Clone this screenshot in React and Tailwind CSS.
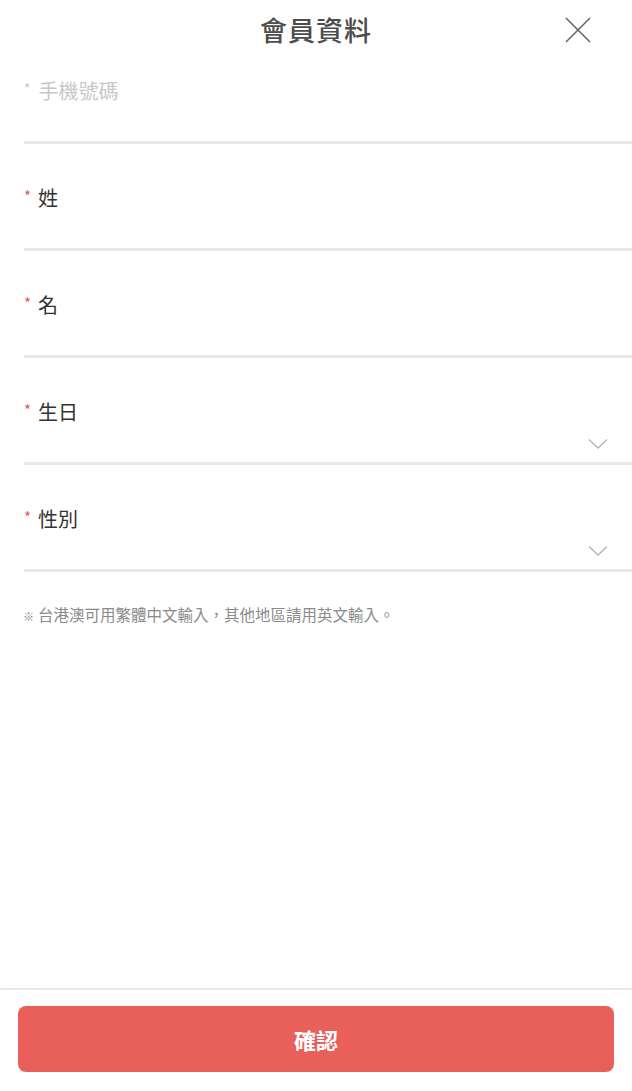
import React from "react";

const font = { fontFamily: '"Noto Sans CJK TC", "Noto Sans", sans-serif' };

function Chevron() {
  return (
    <svg width="20" height="12" viewBox="0 0 20 12" fill="none">
      <path d="M1 1.5 L10 10 L19 1.5" stroke="#b5b5b5" strokeWidth="1.4" />
    </svg>
  );
}

function Field({ label, first, placeholder, select }) {
  return (
    <div className={`${first ? "pt-[18px]" : "pt-[41px]"} border-b-[3px] border-[#e8e8e8]`}>
      <div className="h-[26px] flex items-center">
        {placeholder ? (
          <span className="text-[20px] text-[#c8c8c8] leading-[26px] flex items-center">
            <span className="text-[14px] mr-[8px] relative top-[-3px]">*</span>
            {label}
          </span>
        ) : (
          <span className="text-[20px] text-[#333] leading-[26px] flex items-center">
            <span className="text-[15px] text-[#e05b58] mr-[7px] relative top-[-2px]">*</span>
            {label}
          </span>
        )}
      </div>
      <div className="h-[37px] flex items-center justify-end pr-[24px]">
        {select && <Chevron />}
      </div>
    </div>
  );
}

export default function App() {
  return (
    <div className="h-screen bg-white flex flex-col" style={font}>
      <div className="h-[60px] relative flex items-center justify-center">
        <span className="text-[27px] font-medium text-[#4d4d4d] tracking-[1px]">會員資料</span>
        <button className="absolute right-[40px] top-[16px] w-[28px] h-[28px] flex items-center justify-center">
          <svg width="26" height="26" viewBox="0 0 26 26" fill="none">
            <path d="M1 1 L25 25 M25 1 L1 25" stroke="#666" strokeWidth="1.6" />
          </svg>
        </button>
      </div>
      <div className="pl-[24px]">
        <Field label="手機號碼" first placeholder />
        <Field label="姓" />
        <Field label="名" />
        <Field label="生日" select />
        <Field label="性別" select />
      </div>
      <div className="pl-[23px] mt-[32px] text-[15.5px] leading-[20px] text-[#8a8a8a]">
        <span className="text-[11px] mr-[4px]">※</span>台港澳可用繁體中文輸入，其他地區請用英文輸入。
      </div>
      <div className="mt-auto border-t-2 border-[#e8e8e8] pt-[16px] px-[18px] pb-[19px]">
        <button className="w-full h-[66px] rounded-[8px] bg-[#e9605b] text-white text-[22px] font-bold">
          確認
        </button>
      </div>
    </div>
  );
}
